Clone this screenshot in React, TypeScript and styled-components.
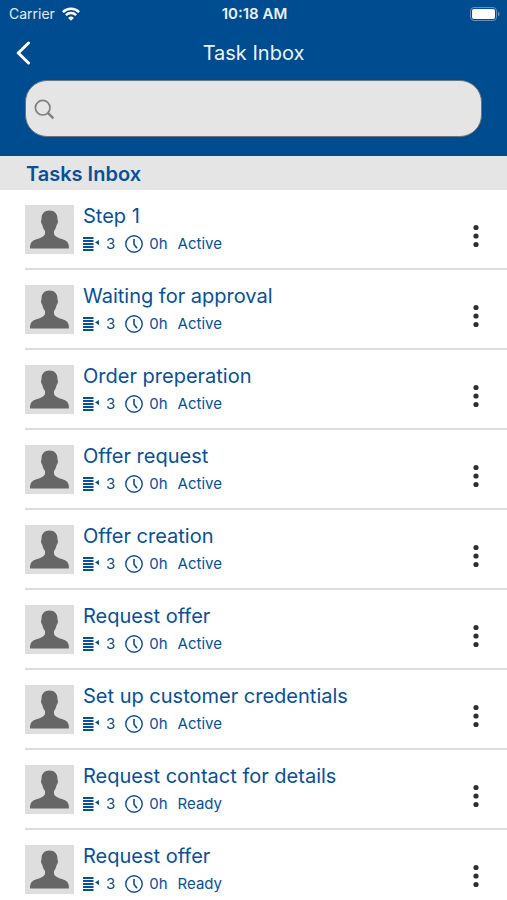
import React, { useState } from "react";
import styled, { createGlobalStyle } from "styled-components";

const blue = "#004c91";
const textBlue = "#07509a";

const GlobalStyle = createGlobalStyle`
  *, *::before, *::after { box-sizing: border-box; }
  body {
    margin: 0;
    background: #fff;
    color: ${textBlue};
    font-family: Inter, "Liberation Sans", sans-serif;
  }
`;

const Page = styled.div`
  display: flex;
  flex-direction: column;
  min-height: 100vh;
`;

const Header = styled.header`
  background: ${blue};
  color: #fff;
  padding-bottom: 19px;
`;

const StatusBar = styled.div`
  display: grid;
  grid-template-columns: 1fr auto 1fr;
  align-items: center;
  height: 28px;
  padding: 0 7px 0 9px;
  font-size: 14px;
  line-height: 16px;
`;

const Carrier = styled.span`
  display: flex;
  align-items: center;
  gap: 7px;
  color: #e3edf7;
`;

const Clock = styled.time`
  font-size: 15px;
  font-weight: 600;
  color: #e9f1f9;
`;

const Battery = styled.svg`
  justify-self: end;
`;

const NavBar = styled.div`
  display: grid;
  grid-template-columns: 48px 1fr 48px;
  align-items: center;
  height: 49px;
`;

const BackButton = styled.button`
  display: flex;
  align-items: center;
  height: 48px;
  padding: 0 0 0 16px;
  border: 0;
  background: none;
  color: #fff;
  cursor: pointer;
`;

const Title = styled.h1`
  margin: 0;
  text-align: center;
  font-size: 20px;
  line-height: 28px;
  font-weight: 400;
  color: #edf4fa;
`;

const SearchBox = styled.label`
  display: flex;
  align-items: center;
  gap: 8px;
  height: 57px;
  margin: 3px 25px 0;
  padding: 1px 16px 0 8px;
  border: 1px solid #6c7379;
  border-radius: 22px;
  background: #e5e5e5;
`;

const SearchInput = styled.input`
  flex: 1;
  min-width: 0;
  border: 0;
  outline: 0;
  background: transparent;
  color: ${textBlue};
  font: inherit;
  font-size: 20px;
`;

const SectionTitle = styled.h2`
  margin: 0;
  padding: 5px 26px 2px;
  background: #e5e5e5;
  font-size: 20px;
  line-height: 27px;
  font-weight: 600;
`;

const TaskList = styled.ul`
  margin: 0;
  padding: 0 0 0 25px;
  list-style: none;
`;

const TaskRow = styled.li`
  display: flex;
  height: 80px;
  padding: 15px 15px 0 0;
  border-bottom: 2px solid #dcdcdc;

  &:last-child {
    height: 70px;
    border-bottom: 0;
  }
`;

const Avatar = styled.svg`
  flex: none;
  background: #dedede;
`;

const TaskBody = styled.div`
  flex: 1;
  min-width: 0;
  padding-left: 9px;
`;

const TaskName = styled.h3`
  margin: 0;
  font-size: 20px;
  line-height: 22px;
  font-weight: 400;
`;

const Meta = styled.div`
  display: flex;
  align-items: center;
  height: 20px;
  margin-top: 7px;
  font-size: 15px;
  line-height: 20px;
`;

const MetaItem = styled.span<{ $gap?: number }>`
  display: flex;
  align-items: center;
  gap: ${({ $gap = 0 }) => $gap}px;
  margin-right: 10px;
`;

const MoreButton = styled.button`
  display: flex;
  align-items: center;
  justify-content: center;
  width: 32px;
  height: 48px;
  margin-top: 7px;
  padding: 0;
  border: 0;
  background: none;
  color: #303030;
  cursor: pointer;
`;

const WifiIcon = () => (
  <svg width="18" height="14" viewBox="0 0 18 14" fill="none" stroke="#fff" strokeWidth="2.5" aria-hidden="true">
    <path d="M.9 5.1a11.6 11.6 0 0 1 16.2 0" />
    <path d="M3.9 8.2a7.3 7.3 0 0 1 10.2 0" />
    <path d="M9 13.8 6.1 10.9a4.2 4.2 0 0 1 5.8 0Z" fill="#fff" stroke="none" />
  </svg>
);

const BatteryIcon = () => (
  <Battery width="30" height="14" viewBox="0 0 30 14" role="img" aria-label="Battery full">
    <rect x=".5" y=".5" width="26" height="13" rx="3.5" fill="none" stroke="#5f91c2" />
    <rect x="2" y="2" width="23" height="10" rx="2" fill="#fff" />
    <path d="M28 4.7c2 .5 2 4.1 0 4.6Z" fill="#5f91c2" />
  </Battery>
);

const BackIcon = () => (
  <svg width="15" height="24" viewBox="0 0 15 24" fill="none" stroke="currentColor" strokeWidth="3" strokeLinecap="round" strokeLinejoin="round" aria-hidden="true">
    <path d="M12.5 2 2.3 12l10.2 10" />
  </svg>
);

const SearchIcon = () => (
  <svg width="21" height="21" viewBox="0 0 21 21" fill="none" stroke="#808080" aria-hidden="true">
    <circle cx="8.7" cy="8.7" r="7.3" strokeWidth="1.7" />
    <path d="m14.1 14.1 5.3 5.2" strokeWidth="2.4" />
  </svg>
);

const Person = () => (
  <Avatar width="49" height="49" viewBox="0 0 49 49" aria-hidden="true">
    <path
      fill="#666"
      d="M24.500 5.500c5 0 8 3 8 8.500v1c.6.300.5 1.400.3 2.500-.2 1.200-.6 2-1.100 2.300-.5 2.600-1.400 4.700-2.700 6v3.200c1 2.600 4.500 3.900 8 5.100 5 1.700 7 3.400 7 9.400H5c0-6 2-7.700 7-9.400 3.500-1.200 7-2.500 8-5.100v-3.200c-1.300-1.300-2.200-3.400-2.700-6-.5-.3-.9-1.100-1.100-2.300-.2-1.100-.3-2.200.3-2.500v-1c0-5.500 3-8.500 8-8.500Z"
    />
  </Avatar>
);

const PriorityIcon = () => (
  <svg width="17" height="16" viewBox="0 0 17 16" role="img" aria-label="Priority">
    <path d="M0 2h10.500M0 5h10.500M0 8h10.500M0 11h10.500M0 14h10.500" stroke={textBlue} strokeWidth="1.8" />
    <path d="m12 6.500 4-2.500v5Z" fill={textBlue} />
  </svg>
);

const ClockIcon = () => (
  <svg width="18" height="18" viewBox="0 0 18 18" fill="none" stroke={textBlue} role="img" aria-label="Age">
    <circle cx="9" cy="9" r="8.200" strokeWidth="1.400" />
    <path d="M9 4v5.200l3 4" strokeWidth="1.600" />
  </svg>
);

const MoreIcon = () => (
  <svg width="6" height="24" viewBox="0 0 6 24" fill="currentColor" aria-hidden="true">
    <circle cx="3" cy="3.500" r="2.600" />
    <circle cx="3" cy="12" r="2.600" />
    <circle cx="3" cy="20.500" r="2.600" />
  </svg>
);

const tasks = [
  { name: "Step 1", status: "Active" },
  { name: "Waiting for approval", status: "Active" },
  { name: "Order preperation", status: "Active" },
  { name: "Offer request", status: "Active" },
  { name: "Offer creation", status: "Active" },
  { name: "Request offer", status: "Active" },
  { name: "Set up customer credentials", status: "Active" },
  { name: "Request contact for details", status: "Ready" },
  { name: "Request offer", status: "Ready" },
];

export default function App() {
  const [query, setQuery] = useState("");
  const visible = tasks.filter((t) => t.name.toLowerCase().includes(query.toLowerCase()));

  return (
    <Page>
      <GlobalStyle />
      <Header>
        <StatusBar>
          <Carrier>
            Carrier
            <WifiIcon />
          </Carrier>
          <Clock>10:18 AM</Clock>
          <BatteryIcon />
        </StatusBar>
        <NavBar>
          <BackButton type="button" aria-label="Back">
            <BackIcon />
          </BackButton>
          <Title>Task Inbox</Title>
        </NavBar>
        <SearchBox>
          <SearchIcon />
          <SearchInput type="search" aria-label="Search tasks" value={query} onChange={(e) => setQuery(e.target.value)} />
        </SearchBox>
      </Header>
      <main>
        <SectionTitle>Tasks Inbox</SectionTitle>
        <TaskList>
          {visible.map((task, i) => (
            <TaskRow key={i}>
              <Person />
              <TaskBody>
                <TaskName>{task.name}</TaskName>
                <Meta>
                  <MetaItem $gap={6}>
                    <PriorityIcon />3
                  </MetaItem>
                  <MetaItem $gap={6}>
                    <ClockIcon />
                    0h
                  </MetaItem>
                  <MetaItem>{task.status}</MetaItem>
                </Meta>
              </TaskBody>
              <MoreButton type="button" aria-label={`More actions for ${task.name}`}>
                <MoreIcon />
              </MoreButton>
            </TaskRow>
          ))}
        </TaskList>
      </main>
    </Page>
  );
}
